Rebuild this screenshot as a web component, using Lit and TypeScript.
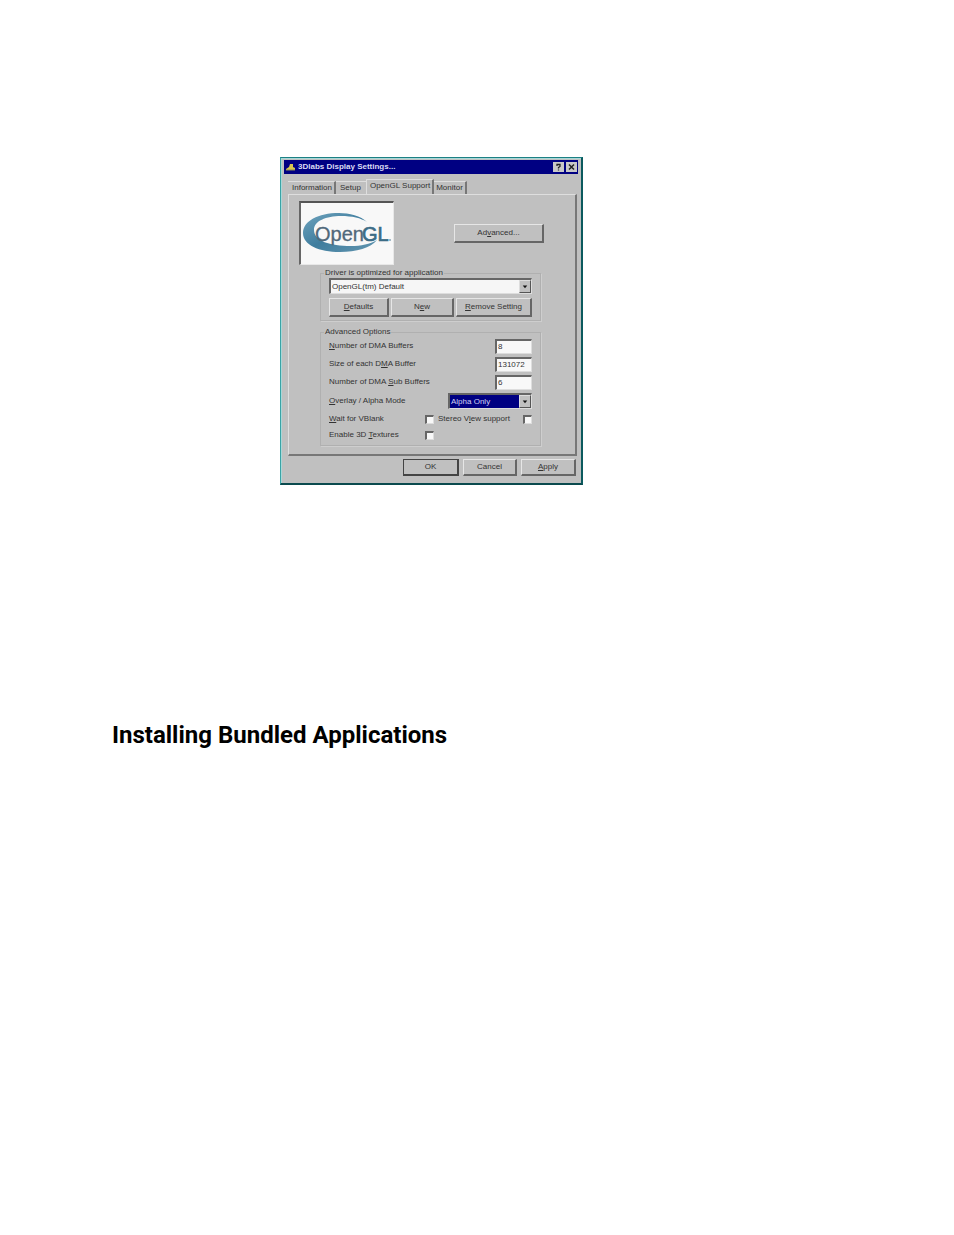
import { LitElement, html, css, svg } from "lit";
import { customElement, state } from "lit/decorators.js";

const arrow = svg`<path d="M3 5h5L5.500 8z" fill="#111"/>`;

@customElement("opengl-logo")
class OpenglLogo extends LitElement {
  static styles = css`
    :host { display: block; }
    svg { display: block; width: 100%; height: 100%; }
    text { font-family: "Liberation Sans", Arial, sans-serif; font-size: 20px; }
  `;
  render() {
    return html`<svg viewBox="0 0 92 61" role="img" aria-label="OpenGL">
      <defs>
        <linearGradient id="ring" x1="0" x2="1" y1="0" y2="1">
          <stop offset="0" stop-color="#6fa3bd" />
          <stop offset="0.5" stop-color="#3f7d9e" />
          <stop offset="1" stop-color="#6396b0" />
        </linearGradient>
      </defs>
      <path fill="url(#ring)"
        d="M66 19C60 13 48 10 38 10C17 10 2 18 2 30C2 42 18 49 39 49C55 49 70 45 76 37C69 41 60 43 50 43C29 43 13 38 13 27C13 18 25 13 40 13C51 13 60 15 66 19Z" />
      <text x="14" y="38" fill="#50687a" stroke="#50687a" stroke-width="0.300">Open</text>
      <text x="61" y="38" fill="#3b6c86" stroke="#3b6c86" stroke-width="0.700">GL</text>
      <circle cx="89" cy="37" r="0.800" fill="#3b6c86" />
    </svg>`;
  }
}

@customElement("app-root")
class AppRoot extends LitElement {
  @state() private tab = "OpenGL Support";

  static styles = css`
    :host {
      display: block;
      background: #fff;
      color: #000;
      font-family: "Liberation Sans", Arial, sans-serif;
    }
    *, *::before, *::after { box-sizing: border-box; }
    .page { padding: 157px 112px 0; }
    .dialog {
      width: 303px;
      max-width: 100%;
      margin-left: 168px;
      padding: 2px 3px 7px;
      background: #c0c0c0;
      border: 1px solid #1c8084;
      border-left-color: #3aa4a6;
      border-right: 2px solid #0b5a5e;
      border-bottom: 2px solid #0b4a4e;
      box-shadow: inset 1px 1px 0 #a8d8d8;
      font-size: 8px;
      line-height: 10px;
      color: #333;
    }
    button, input, select { font: inherit; color: inherit; margin: 0; border-radius: 0; }
    .title {
      display: flex;
      align-items: center;
      gap: 2px;
      height: 14px;
      padding: 0 1px;
      background: #000082;
      color: #dcdcf4;
    }
    .title h1 { flex: 1; margin: 0; font-size: 8px; line-height: 10px; }
    .title svg { width: 11px; height: 10px; }
    .sys {
      display: flex;
      width: 11px;
      height: 10px;
      padding: 0;
      border: 0;
      background: #c8c8c8;
    }
    .tabs { display: flex; align-items: flex-end; margin: 5px 4px 0; height: 15px; }
    .tab {
      height: 13px;
      padding: 0 2px 0 4px;
      border: 0;
      border-top: 1px solid #dedede;
      border-right: 2px solid #777;
      background: none;
    }
    .tab.before { padding-right: 5px; border-right: 0; }
    .tab.active { height: 15px; padding: 0 2px 2px 3px; border-left: 1px solid #dedede; }
    .tab:last-child { padding: 0 2px; }
    .panel {
      margin: 0 1px 0 4px;
      padding: 6px 34px 8px 31px;
      border: 1px solid #dedede;
      border-right: 2px solid #777;
      border-bottom: 2px solid #777;
    }
    .head { display: flex; justify-content: space-between; align-items: center; margin: 0 -3px 0 -21px; }
    .logo {
      width: 95px;
      height: 64px;
      border: 1px solid #e8e8e8;
      border-top: 2px solid #555;
      border-left: 2px solid #666;
      background: #f8f8f8;
    }
    .btn {
      height: 19px;
      padding: 0 2px;
      background: #c0c0c0;
      border: 1px solid #e6e6e6;
      border-right: 2px solid #666;
      border-bottom: 2px solid #666;
      text-align: center;
    }
    .advanced { width: 90px; }
    fieldset { min-width: 0; margin: 0; padding: 0 8px; border: 1px solid #b0b0b0; box-shadow: 1px 1px 0 #cecece; }
    legend { padding: 0 1px; margin-left: -5px; }
    .driver { margin-top: 3px; }
    .options { margin-top: 6px; padding-bottom: 2px; }
    .pick { position: relative; display: block; }
    .pick select {
      display: block;
      appearance: none;
      width: 100%;
      height: 16px;
      padding: 0 14px 0 1px;
      border: 1px solid #ddd;
      border-top: 2px solid #666;
      border-left: 2px solid #666;
      background: #f6f6f6;
    }
    .pick svg {
      position: absolute;
      top: 2px;
      right: 1px;
      width: 12px;
      height: 13px;
      background: #c0c0c0;
      border: 1px solid #ddd;
      border-right-color: #555;
      border-bottom-color: #555;
      pointer-events: none;
    }
    .pick.dark select { background: #000082; color: #d0d0f4; }
    .trio { display: grid; grid-template-columns: 60px 63px 1fr; gap: 2px; margin-top: 4px; padding-bottom: 3px; }
    .row { display: flex; align-items: center; justify-content: space-between; height: 18px; }
    .row.mode { height: 20px; }
    .row.mode .pick { width: 84px; }
    .row.tick { height: 16px; }
    .row.tick .first { width: 96px; }
    .row.tick .second { flex: 1; margin-left: 4px; }
    .num {
      width: 37px;
      height: 15px;
      padding: 0 1px;
      border: 1px solid #ddd;
      border-top: 2px solid #666;
      border-left: 2px solid #666;
      background: #f8f8f8;
    }
    .check {
      appearance: none;
      width: 9px;
      height: 9px;
      background: #f8f8f8;
      border: 1px solid #ddd;
      border-top: 2px solid #666;
      border-left: 2px solid #666;
    }
    .check:checked { background: #333; }
    .actions { display: grid; grid-template-columns: 56px 54px 55px; gap: 4px; justify-content: end; margin: 3px 2px 0 0; }
    .actions .btn { height: 17px; }
    .actions .ok { border: 1px solid #444; border-right-width: 2px; border-bottom-width: 2px; }
    h2 {
      margin: 236px 0 0;
      font-family: Roboto, "Liberation Sans", sans-serif;
      font-size: 24px;
      line-height: 28px;
      font-weight: 700;
    }
  `;

  private tabButton(name: string, before = false) {
    const active = this.tab === name;
    return html`<button role="tab" aria-selected=${active}
      class="tab ${active ? "active" : ""} ${before ? "before" : ""}"
      @click=${() => (this.tab = name)}>${name}</button>`;
  }

  render() {
    return html`<main class="page">
      <section class="dialog" aria-label="3Dlabs Display Settings">
        <header class="title">
          <svg viewBox="0 0 11 10" aria-hidden="true">
            <path d="M1 7L4 5L5 2L8 2L8 5L10 6L10 8H1Z" fill="#d8c850" />
            <path d="M1 8H10" stroke="#8a8a50" />
          </svg>
          <h1>3Dlabs Display Settings...</h1>
          <button class="sys" aria-label="Help"><svg viewBox="0 0 11 10"><path d="M4 4V2.500H7V4.500L5.500 5.500V6.500M5.500 7.500V8.500" fill="none" stroke="#222" stroke-width="1.300" /></svg></button>
          <button class="sys" aria-label="Close"><svg viewBox="0 0 11 10"><path d="M3 2.500L8 7.500M8 2.500L3 7.500" stroke="#222" stroke-width="1.500" /></svg></button>
        </header>
        <nav class="tabs" role="tablist">
          ${this.tabButton("Information")}
          ${this.tabButton("Setup", true)}
          ${this.tabButton("OpenGL Support")}
          ${this.tabButton("Monitor")}
        </nav>
        <div class="panel" role="tabpanel">
          <div class="head">
            <opengl-logo class="logo"></opengl-logo>
            <button class="btn advanced">Ad<u>v</u>anced...</button>
          </div>
          <fieldset class="driver">
            <legend>Driver is optimized for application</legend>
            <label class="pick">
              <select aria-label="Driver is optimized for application"><option>OpenGL(tm) Default</option></select>
              <svg viewBox="0 0 11 12" aria-hidden="true">${arrow}</svg>
            </label>
            <div class="trio">
              <button class="btn"><u>D</u>efaults</button>
              <button class="btn">N<u>e</u>w</button>
              <button class="btn"><u>R</u>emove Setting</button>
            </div>
          </fieldset>
          <fieldset class="options">
            <legend>Advanced Options</legend>
            <div class="row"><label for="buffers"><u>N</u>umber of DMA Buffers</label><input class="num" id="buffers" value="8" /></div>
            <div class="row"><label for="size">Size of each D<u>M</u>A Buffer</label><input class="num" id="size" value="131072" /></div>
            <div class="row"><label for="sub">Number of DMA <u>S</u>ub Buffers</label><input class="num" id="sub" value="6" /></div>
            <div class="row mode">
              <label for="mode"><u>O</u>verlay / Alpha Mode</label>
              <span class="pick dark"><select id="mode"><option>Alpha Only</option></select>
                <svg viewBox="0 0 11 12" aria-hidden="true">${arrow}</svg></span>
            </div>
            <div class="row tick">
              <label class="first" for="vblank"><u>W</u>ait for VBlank</label><input class="check" type="checkbox" id="vblank" />
              <label class="second" for="stereo">Stereo V<u>i</u>ew support</label><input class="check" type="checkbox" id="stereo" />
            </div>
            <div class="row tick">
              <label class="first" for="textures">Enable 3D <u>T</u>extures</label><input class="check" type="checkbox" id="textures" />
              <span class="second"></span>
            </div>
          </fieldset>
        </div>
        <footer class="actions">
          <button class="btn ok">OK</button>
          <button class="btn">Cancel</button>
          <button class="btn"><u>A</u>pply</button>
        </footer>
      </section>
      <h2>Installing Bundled Applications</h2>
    </main>`;
  }
}
